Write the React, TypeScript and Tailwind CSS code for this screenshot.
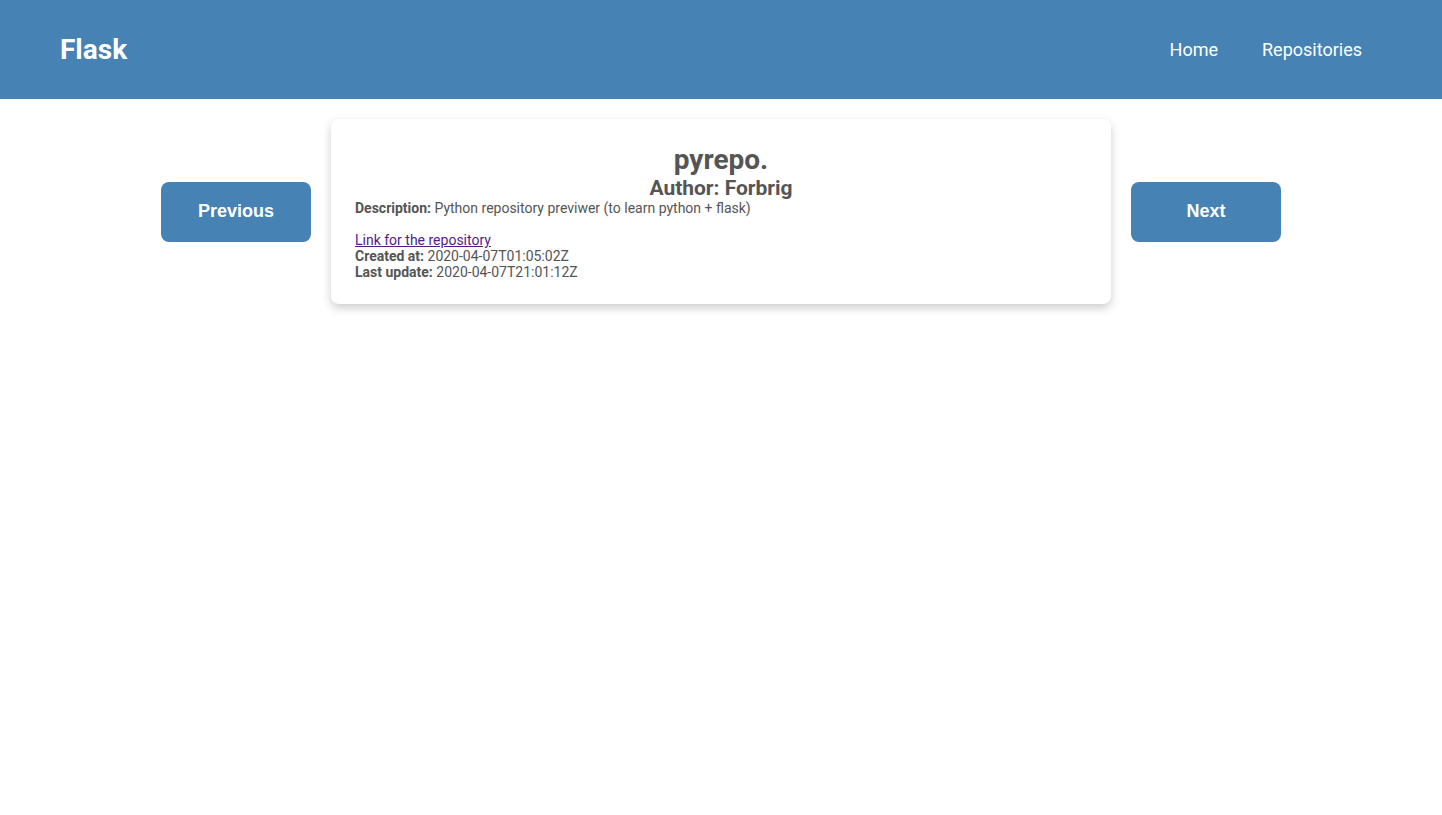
export default function App() {
  return (
    <main className="min-h-screen w-full bg-white font-['Roboto',sans-serif] text-[#555]">
      <header className="flex h-[99px] items-center justify-between bg-[#4682b4] pl-[60px] pr-[80px] text-white">
        <h1 className="text-[28px] font-bold">Flask</h1>
        <nav className="flex gap-[44px] text-[18px]">
          <a href="#">Home</a>
          <a href="#">Repositories</a>
        </nav>
      </header>

      <section className="mt-[20px] flex items-center justify-center gap-[20px]">
        <button className="h-[60px] w-[150px] rounded-lg bg-[#4682b4] font-['Liberation_Sans',Arial,sans-serif] text-[18px] font-bold text-white">
          Previous
        </button>

        <div className="w-[780px] rounded-lg bg-white px-[24px] pt-[25px] pb-[24px] text-[14px] leading-[16px] shadow-[0_4px_10px_rgba(0,0,0,0.2)]">
          <h2 className="text-center text-[28px] font-bold leading-[32.8px]">pyrepo.</h2>
          <h3 className="text-center text-[21px] font-bold leading-[23.6px]">Author: Forbrig</h3>
          <p>
            <b>Description:</b> Python repository previwer (to learn python + flask)
          </p>
          <br />
          <a href="#" className="text-[#551a8b] underline">
            Link for the repository
          </a>
          <p>
            <b>Created at:</b> 2020-04-07T01:05:02Z
          </p>
          <p>
            <b>Last update:</b> 2020-04-07T21:01:12Z
          </p>
        </div>

        <button className="h-[60px] w-[150px] rounded-lg bg-[#4682b4] font-['Liberation_Sans',Arial,sans-serif] text-[18px] font-bold text-white">
          Next
        </button>
      </section>
    </main>
  );
}
